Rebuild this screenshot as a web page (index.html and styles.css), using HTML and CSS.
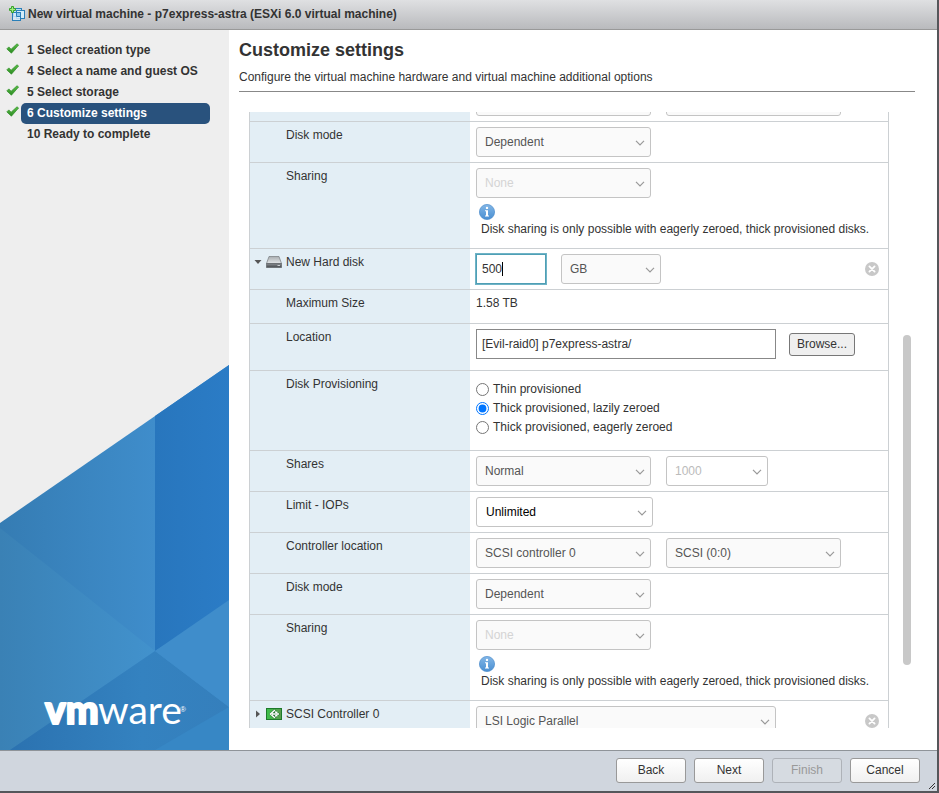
FILE: index.html
```
<!DOCTYPE html>
<html lang="en">
<head>
<meta charset="utf-8">
<title>New virtual machine</title>
<link rel="stylesheet" href="styles.css">
</head>
<body>
<svg class="defs" aria-hidden="true">
  <defs>
    <linearGradient id="tick-fill" x1="0" y1="0" x2="0" y2="1"><stop offset="0" stop-color="#5cc04a"/><stop offset="1" stop-color="#2c8a22"/></linearGradient>
    <linearGradient id="info-fill" x1="0" y1="0" x2="0" y2="1"><stop offset="0" stop-color="#82b6e6"/><stop offset="1" stop-color="#4a8fd2"/></linearGradient>
    <linearGradient id="disk-top" x1="0" y1="0" x2="0" y2="1"><stop offset="0" stop-color="#a9adb0"/><stop offset="1" stop-color="#e4e7e9"/></linearGradient>
    <linearGradient id="disk-front" x1="0" y1="0" x2="0" y2="1"><stop offset="0" stop-color="#8a8e92"/><stop offset="1" stop-color="#45494d"/></linearGradient>
    <linearGradient id="card-fill" x1="0" y1="0" x2="1" y2="0"><stop offset="0" stop-color="#3cc04a"/><stop offset="1" stop-color="#5a9a4e"/></linearGradient>
  </defs>
  <symbol id="tick" viewBox="0 0 13 11"><path d="M.8 5.900 2.800 3.900 5.100 6.200 11 .8 12.600 2 5.400 10.200Z" fill="url(#tick-fill)" stroke="#2f8f27" stroke-width=".7"/></symbol>
  <symbol id="info" viewBox="0 0 16 16"><circle cx="8" cy="8" r="7.600" fill="url(#info-fill)" stroke="#4c8ccb" stroke-width=".7"/><circle cx="8" cy="3.900" r="1.200" fill="#fff"/><path d="M6 6.300h3v5.200h1v1H6v-1h1V7.300H6Z" fill="#fff"/></symbol>
  <symbol id="remove" viewBox="0 0 14 14"><circle cx="7" cy="7" r="7" fill="#c8c8c8"/><path d="m4.400 4.400 5.200 5.200m0-5.200L4.400 9.600" stroke="#fff" stroke-width="1.800" stroke-linecap="round"/></symbol>
</svg>

<div class="dialog">
  <header class="titlebar">
    <svg class="vm-icon" viewBox="0 0 16 16" aria-hidden="true">
      <g stroke="#2a7fb8"><rect x="4.500" y="2.500" width="8" height="8" fill="#b9dff5"/><rect x="7.500" y="4.500" width="8" height="8" fill="#d4edfa"/><rect x="3.500" y="6.500" width="8" height="8" fill="#d9eefa" fill-opacity=".8"/><path d="M7.500 6.500v4h4v-4Z" fill="#8cc8ec"/></g>
      <path d="M2.500.5h2v2h2v2h-2v2h-2v-2h-2v-2h2Z" fill="#a5ec7e" stroke="#38a32c"/>
    </svg>
    <span>New virtual machine - p7express-astra (ESXi 6.0 virtual machine)</span>
  </header>

  <div class="body">
    <nav class="sidebar">
      <svg class="art" viewBox="0 0 229 385" preserveAspectRatio="none" aria-hidden="true">
        <defs>
          <linearGradient id="a1" gradientUnits="userSpaceOnUse" x1="0" y1="0" x2="155" y2="0"><stop offset="0" stop-color="#357cb3"/><stop offset="1" stop-color="#3f8dcb"/></linearGradient>
          <linearGradient id="a2"><stop offset="0" stop-color="#3a81b5"/><stop offset="1" stop-color="#4292cd"/></linearGradient>
          <linearGradient id="a3"><stop offset="0" stop-color="#2b72b0"/><stop offset=".6" stop-color="#3482c0"/><stop offset="1" stop-color="#357fbc"/></linearGradient>
          <linearGradient id="a4"><stop offset="0" stop-color="#2876bd"/><stop offset="1" stop-color="#2b7cc6"/></linearGradient>
        </defs>
        <path d="M0 158 229 0v385H0Z" fill="url(#a1)"/>
        <path d="M155 51 229 0v240l-74 46Z" fill="url(#a4)"/>
        <path d="M0 163 155 286 10 385H0Z" fill="url(#a2)"/>
        <path d="M155 286 229 342v43H10Z" fill="url(#a3)"/>
        <path d="M155 286 229 235v107Z" fill="#3f8dcb"/>
        <path d="M229 342v43h-74Z" fill="#3787c5"/>
      </svg>
      <svg class="logo" viewBox="0 0 160 60" role="img" aria-label="vmware">
        <text class="logo-text logo-heavy" x="3" y="42">vm</text>
        <text class="logo-text" x="56" y="42">ware</text>
        <text class="logo-mark" x="138" y="30">®</text>
      </svg>
      <ol class="steps">
        <li><svg class="tick"><use href="#tick"/></svg><a href="#">1 Select creation type</a></li>
        <li><svg class="tick"><use href="#tick"/></svg><a href="#">4 Select a name and guest OS</a></li>
        <li><svg class="tick"><use href="#tick"/></svg><a href="#">5 Select storage</a></li>
        <li><svg class="tick"><use href="#tick"/></svg><a href="#" class="current" aria-current="step">6 Customize settings</a></li>
        <li><span class="tick"></span><a href="#">10 Ready to complete</a></li>
      </ol>
    </nav>

    <main class="main">
      <h1>Customize settings</h1>
      <p class="intro">Configure the virtual machine hardware and virtual machine additional options</p>
      <div class="viewport">
        <div class="scroller">
          <table class="settings">
            <tbody>
            <tr><th scope="row"></th><td><div class="line"><select class="w-md" aria-label="Controller" disabled><option></option></select><select class="w-md" aria-label="Controller slot" disabled><option></option></select></div></td></tr>
            <tr><th scope="row"><label for="mode1">Disk mode</label></th><td><select id="mode1" class="w-md" disabled><option>Dependent</option></select></td></tr>
            <tr class="share"><th scope="row"><label for="share1">Sharing</label></th><td><select id="share1" class="w-md faint" disabled><option>None</option></select><svg class="info"><use href="#info"/></svg><p class="note">Disk sharing is only possible with eagerly zeroed, thick provisioned disks.</p></td></tr>
            <tr><th scope="row"><div class="device"><svg class="arrow" viewBox="0 0 8 8"><path d="M.5 2h7L4 6Z" fill="#555"/></svg><svg class="device-icon" viewBox="0 0 16 14"><path d="M3 1.500h10l2.500 7h-15Z" fill="url(#disk-top)" stroke="#777b7e" stroke-width=".7"/><path d="M.4 8.500h15.200v4H.4Z" fill="url(#disk-front)" stroke="#55595c" stroke-width=".6"/><path d="M11.500 10.500h2.500" stroke="#c9cdd0"/></svg><label for="size">New Hard disk</label></div></th><td><div class="line"><div class="size-field"><input id="size" class="size" type="text" value="500" autofocus></div><select class="w-sm" aria-label="Unit" disabled><option>GB</option></select><button class="remove" type="button" aria-label="Remove disk"><svg><use href="#remove"/></svg></button></div></td></tr>
            <tr class="plain"><th scope="row">Maximum Size</th><td>1.58 TB</td></tr>
            <tr class="location"><th scope="row"><label for="loc">Location</label></th><td><div class="line loc-line"><input id="loc" class="path" type="text" value="[Evil-raid0] p7express-astra/"><button class="browse" type="button">Browse...</button></div></td></tr>
            <tr class="prov"><th scope="row">Disk Provisioning</th><td><div class="radios"><label><input type="radio" name="prov">Thin provisioned</label><label><input type="radio" name="prov" checked>Thick provisioned, lazily zeroed</label><label><input type="radio" name="prov">Thick provisioned, eagerly zeroed</label></div></td></tr>
            <tr><th scope="row"><label for="shares">Shares</label></th><td><div class="line"><select id="shares" class="w-md" disabled><option>Normal</option></select><select class="w-sm faint2" aria-label="Share count" disabled><option>1000</option></select></div></td></tr>
            <tr><th scope="row"><label for="iops">Limit - IOPs</label></th><td><select id="iops" class="w-md live"><option>Unlimited</option></select></td></tr>
            <tr><th scope="row"><label for="ctrl">Controller location</label></th><td><div class="line"><select id="ctrl" class="w-md" disabled><option>SCSI controller 0</option></select><select class="w-md" aria-label="Slot" disabled><option>SCSI (0:0)</option></select></div></td></tr>
            <tr><th scope="row"><label for="mode2">Disk mode</label></th><td><select id="mode2" class="w-md" disabled><option>Dependent</option></select></td></tr>
            <tr class="share"><th scope="row"><label for="share2">Sharing</label></th><td><select id="share2" class="w-md faint" disabled><option>None</option></select><svg class="info"><use href="#info"/></svg><p class="note">Disk sharing is only possible with eagerly zeroed, thick provisioned disks.</p></td></tr>
            <tr><th scope="row"><div class="device"><svg class="arrow" viewBox="0 0 8 8"><path d="M2 .5v7L6 4Z" fill="#555"/></svg><svg class="device-icon" viewBox="0 0 16 14"><rect x=".5" y="1.500" width="15" height="11" fill="url(#card-fill)" stroke="#1d7a2a"/><path d="M8.500 2 3 7l5.500 5L14 7Z" fill="#1c6b2a"/><path d="M9 3 4.500 7 9 11M6 7h7M9 5l2.500.5M9 9l2.500-.5" fill="none" stroke="#fff" stroke-width="1.500"/></svg><label for="scsi">SCSI Controller 0</label></div></th><td><div class="line"><select id="scsi" class="w-lg" disabled><option>LSI Logic Parallel</option></select><button class="remove" type="button" aria-label="Remove controller"><svg><use href="#remove"/></svg></button></div></td></tr>
            </tbody>
          </table>
        </div>
        <div class="scrollbar"><span class="thumb"></span></div>
      </div>
    </main>
  </div>

  <footer class="footer">
    <button type="button">Back</button>
    <button type="button">Next</button>
    <button type="button" disabled>Finish</button>
    <button type="button">Cancel</button>
    <svg class="grip" viewBox="0 0 6 6" aria-hidden="true"><path d="M0 6 6 0M3 6l3-3" stroke="#333"/></svg>
  </footer>
</div>
</body>
</html>
```
FILE: styles.css
```
* { box-sizing: border-box; }
html, body { height: 100%; margin: 0; }
body {
  font-family: "Liberation Sans", Arial, sans-serif;
  font-size: 12px;
  line-height: 14px;
  color: #333;
  background: #5a5a5a;
}
.defs { position: absolute; width: 0; height: 0; }

.dialog {
  display: flex;
  flex-direction: column;
  height: 100vh;
  border-right: 2px solid #55565a;
  border-bottom: 2px solid #55565a;
  background: #fff;
}
.titlebar {
  display: flex;
  align-items: center;
  gap: 3px;
  flex: none;
  height: 30px;
  padding: 0 9px 2px;
  border-bottom: 1px solid #999;
  background: linear-gradient(#dfe0e2, #b9babd);
  font-weight: bold;
}
.vm-icon { width: 16px; height: 16px; }
.body { display: flex; flex: 1; min-height: 0; }

.sidebar {
  position: relative;
  flex: none;
  width: 229px;
  background: #eee;
}
.art { position: absolute; left: 0; bottom: 0; width: 100%; height: 385px; }
.logo { position: absolute; left: 42px; bottom: 8px; width: 160px; height: 60px; }
.logo-text { font-family: Lato, sans-serif; font-size: 39px; fill: #fff; }
.logo-heavy { font-weight: 900; stroke: #fff; stroke-width: 2px; stroke-linejoin: round; }
.logo-mark { font-size: 8px; fill: #fff; }
.steps {
  position: relative;
  display: flex;
  flex-direction: column;
  margin: 0;
  padding: 10px 19px 0 6px;
  list-style: none;
  font-weight: bold;
}
.steps li { display: flex; gap: 2px; }
.tick { flex: none; width: 13px; height: 11px; margin-top: 3px; }
.steps a {
  flex: 1;
  padding: 3px 6px 4px;
  border-radius: 5px;
  color: #333;
  text-decoration: none;
}
.steps .current { background: #29527d; color: #fff; }

.main {
  display: flex;
  flex: 1;
  flex-direction: column;
  min-width: 0;
  padding: 9px 22px 22px 10px;
}
h1 { margin: 0; font-size: 18px; line-height: 22px; }
.intro {
  margin: 0 0 20px;
  padding: 9px 0 7px;
  border-bottom: 1px solid #888;
}
.viewport { display: flex; flex: 1; min-height: 0; padding: 0 4px 0 10px; }
.scroller { flex: 1; overflow: hidden; }
.scrollbar {
  display: grid;
  grid-template-rows: 223fr 330fr 63fr;
  flex: none;
  width: 8px;
  margin-left: 14px;
}
.thumb { grid-row: 2; border-radius: 4px; background: #c8c8c8; }

.settings {
  width: 100%;
  margin-top: -31px;
  border-collapse: separate;
  border-spacing: 0;
  border: solid #ccd0d3;
  border-width: 0 1px;
}
.settings tr { height: 41px; }
.settings th, .settings td {
  padding: 5px 6px;
  border-bottom: 1px solid #ccd0d3;
  text-align: left;
  vertical-align: top;
  font-weight: normal;
}
.settings th { width: 220px; padding: 6px 6px 0 36px; background: #e3eef5; }
.device { display: flex; align-items: center; gap: 4px; margin-left: -32px; height: 14px; }
.arrow { flex: none; width: 8px; height: 8px; }
.device-icon { flex: none; width: 16px; height: 14px; }
.settings .share { height: 86px; }
.settings .plain { height: 34px; }
.settings .plain td { padding-top: 6px; }
.settings .location { height: 47px; }
.settings .prov { height: 80px; }
.line { display: flex; align-items: center; gap: 15px; }
.loc-line { gap: 13px; }

select {
  appearance: none;
  display: block;
  height: 30px;
  padding: 0 8px;
  border: 1px solid #c4c4c4;
  border-radius: 3px;
  background: #fafafa url("data:image/svg+xml,%3Csvg xmlns='http://www.w3.org/2000/svg' width='10' height='6'%3E%3Cpath d='M1 .8 5 4.800 9 .8' fill='none' stroke='%23999' stroke-width='1.200'/%3E%3C/svg%3E") no-repeat right 5px top 12px;
  color: #555;
  font: inherit;
  opacity: 1;
}
.w-md { width: 175px; }
.w-sm { width: 100px; }
.w-lg { width: 300px; }
.faint { color: #d4d4d4; }
.faint2 { width: 102px; color: #bbb; background-color: #fff; }
.live { width: 177px; padding: 0 9px; background-color: #fff; color: #000; }
.size, .path {
  display: block;
  height: 30px;
  padding: 0 5px;
  border: 1px solid #888;
  color: #333;
  font: inherit;
}
.size-field { position: relative; }
/* Text caret after the typed value */
.size-field::after {
  content: "";
  position: absolute;
  left: 26px;
  top: 8px;
  width: 1px;
  height: 14px;
  background: #000;
}
.size {
  width: 70px;
  outline: 1px solid #6fb3c6;
  border-color: #4f9fb5;
  caret-color: transparent;
}
.path { width: 300px; }
.browse {
  height: 23px;
  padding: 0 7px;
  border: 1px solid #777;
  border-radius: 3px;
  background: #efefef;
  color: #333;
  font: inherit;
}
.remove { width: 14px; height: 14px; margin-left: auto; margin-right: 3px; padding: 0; border: 0; background: none; }
.remove svg { display: block; width: 14px; height: 14px; }
.info { display: block; width: 16px; height: 16px; margin: 6px 0 0 3px; }
.note { margin: 2px 0 0 5px; }
.radios { display: flex; flex-direction: column; gap: 5px; padding-top: 6px; }
.radios label { display: flex; align-items: center; gap: 4px; }
.radios input { width: 13px; height: 13px; margin: 0; }

.footer {
  position: relative;
  display: flex;
  align-items: center;
  justify-content: flex-end;
  gap: 8px;
  flex: none;
  height: 41px;
  padding: 0 17px 2px;
  border-top: 1px solid #8f9499;
  background: #d0d6de;
}
.footer button {
  width: 70px;
  height: 25px;
  padding: 0;
  border: 1px solid #999;
  border-radius: 3px;
  background: linear-gradient(#fff, #f0f0f0);
  color: #333;
  font: inherit;
}
.footer button:disabled { border-color: #aeb2b8; background: #d6dbe1; color: #999; }
.grip { position: absolute; right: 2px; bottom: 2px; width: 6px; height: 6px; }
```
